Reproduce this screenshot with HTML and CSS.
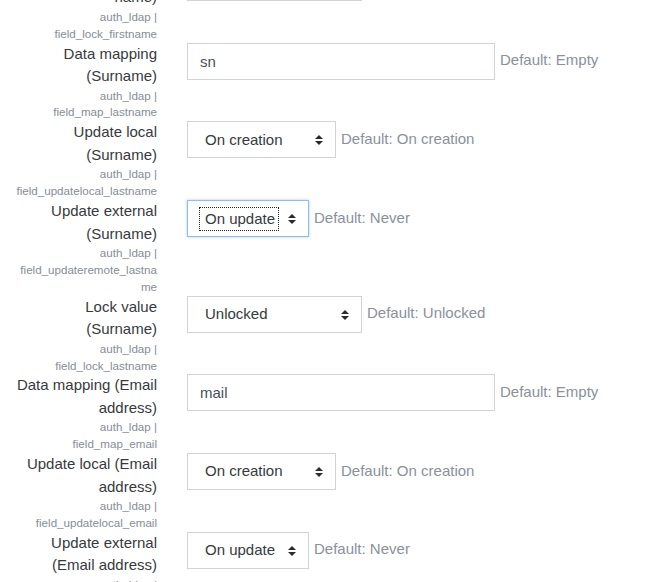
FILE: index.html
```html
<!DOCTYPE html>
<html lang="en">
<head>
  <meta charset="UTF-8" />
  <meta name="viewport" content="width=device-width, initial-scale=1.0" />
  <title>LDAP server - Data mapping</title>
  <link rel="stylesheet" href="styles.css">
</head>
<body>
  <div class="settings">

    <!-- Lock value (First name) -->
    <div class="form-item">
      <div class="form-label">
        <label>Lock value (First name)</label>
        <span class="form-shortname">auth_ldap | field_lock_firstname</span>
      </div>
      <div class="form-setting">
        <div class="select sel-lock"><span class="select-text">Unlocked</span><svg class="select-arrow" width="8" height="10" viewBox="0 0 8 10"><path d="M4 0 L8 4 L0 4 Z M0 6 L8 6 L4 10 Z" fill="#2b2b2b"/></svg></div>
        <div class="form-defaultinfo">Default: Unlocked</div>
      </div>
    </div>

    <!-- Data mapping (Surname) -->
    <div class="form-item">
      <div class="form-label">
        <label for="map_lastname">Data mapping (Surname)</label>
        <span class="form-shortname">auth_ldap | field_map_lastname</span>
      </div>
      <div class="form-setting">
        <input type="text" id="map_lastname" class="text-input" value="sn" />
        <div class="form-defaultinfo">Default: Empty</div>
      </div>
    </div>

    <!-- Update local (Surname) -->
    <div class="form-item">
      <div class="form-label">
        <label>Update local (Surname)</label>
        <span class="form-shortname">auth_ldap | field_updatelocal_lastname</span>
      </div>
      <div class="form-setting">
        <div class="select sel-local"><span class="select-text">On creation</span><svg class="select-arrow" width="8" height="10" viewBox="0 0 8 10"><path d="M4 0 L8 4 L0 4 Z M0 6 L8 6 L4 10 Z" fill="#2b2b2b"/></svg></div>
        <div class="form-defaultinfo">Default: On creation</div>
      </div>
    </div>

    <!-- Update external (Surname) -->
    <div class="form-item">
      <div class="form-label">
        <label>Update external (Surname)</label>
        <span class="form-shortname">auth_ldap | field_updateremote_lastname</span>
      </div>
      <div class="form-setting">
        <div class="select sel-remote is-focused"><span class="select-text">On update</span><svg class="select-arrow" width="8" height="10" viewBox="0 0 8 10"><path d="M4 0 L8 4 L0 4 Z M0 6 L8 6 L4 10 Z" fill="#2b2b2b"/></svg></div>
        <div class="form-defaultinfo">Default: Never</div>
      </div>
    </div>

    <!-- Lock value (Surname) -->
    <div class="form-item">
      <div class="form-label">
        <label>Lock value (Surname)</label>
        <span class="form-shortname">auth_ldap | field_lock_lastname</span>
      </div>
      <div class="form-setting">
        <div class="select sel-lock"><span class="select-text">Unlocked</span><svg class="select-arrow" width="8" height="10" viewBox="0 0 8 10"><path d="M4 0 L8 4 L0 4 Z M0 6 L8 6 L4 10 Z" fill="#2b2b2b"/></svg></div>
        <div class="form-defaultinfo">Default: Unlocked</div>
      </div>
    </div>

    <!-- Data mapping (Email address) -->
    <div class="form-item">
      <div class="form-label">
        <label for="map_email">Data mapping (Email address)</label>
        <span class="form-shortname">auth_ldap | field_map_email</span>
      </div>
      <div class="form-setting">
        <input type="text" id="map_email" class="text-input" value="mail" />
        <div class="form-defaultinfo">Default: Empty</div>
      </div>
    </div>

    <!-- Update local (Email address) -->
    <div class="form-item">
      <div class="form-label">
        <label>Update local (Email address)</label>
        <span class="form-shortname">auth_ldap | field_updatelocal_email</span>
      </div>
      <div class="form-setting">
        <div class="select sel-local"><span class="select-text">On creation</span><svg class="select-arrow" width="8" height="10" viewBox="0 0 8 10"><path d="M4 0 L8 4 L0 4 Z M0 6 L8 6 L4 10 Z" fill="#2b2b2b"/></svg></div>
        <div class="form-defaultinfo">Default: On creation</div>
      </div>
    </div>

    <!-- Update external (Email address) -->
    <div class="form-item">
      <div class="form-label">
        <label>Update external (Email address)</label>
        <span class="form-shortname">auth_ldap | field_updateremote_email</span>
      </div>
      <div class="form-setting">
        <div class="select sel-remote"><span class="select-text">On update</span><svg class="select-arrow" width="8" height="10" viewBox="0 0 8 10"><path d="M4 0 L8 4 L0 4 Z M0 6 L8 6 L4 10 Z" fill="#2b2b2b"/></svg></div>
        <div class="form-defaultinfo">Default: Never</div>
      </div>
    </div>

  </div>
</body>
</html>
```

FILE: styles.css
```css
body {
  margin: 0;
  padding: 0;
  font-family: "Liberation Sans", Arial, sans-serif;
  font-size: 15px;
  line-height: 22.5px;
  color: #373a3c;
  background: #fff;
  overflow: hidden;
}

/* page is scrolled: first setting is cut off at the top */
.settings {
  margin-top: -36.25px;
}

.form-item {
  display: flex;
  align-items: flex-start;
}

.form-label {
  width: 172px;
  flex-shrink: 0;
  box-sizing: border-box;
  padding-left: 13px;
  padding-right: 15px;
  text-align: right;
  overflow-wrap: anywhere;
}

.form-label label {
  display: block;
}

.form-shortname {
  display: block;
  font-size: 11.6px;
  line-height: 16.875px;
  color: #868e96;
}

.form-setting {
  display: flex;
  align-items: flex-start;
  padding-left: 15px;
}

.text-input {
  width: 308px;
  height: 37px;
  margin: 0;
  padding: 0 12px;
  box-sizing: border-box;
  border: 1px solid #ced4da;
  border-radius: 0;
  font-family: inherit;
  font-size: 15px;
  color: #495057;
  background: #fff;
}

.select {
  position: relative;
  display: flex;
  align-items: center;
  height: 37px;
  box-sizing: border-box;
  padding-left: 17px;
  border: 1px solid #ced4da;
  background: #fff;
  color: #373a3c;
}

.sel-lock {
  width: 175px;
}

.sel-local {
  width: 149px;
}

.sel-remote {
  width: 122px;
}

.select-arrow {
  position: absolute;
  right: 12px;
  top: 13px;
}

.select.is-focused {
  border-color: #8cbcf2;
  box-shadow: 0 0 3px rgba(90, 150, 235, 0.45);
}

.select.is-focused .select-text {
  margin-left: -5px;
  padding: 0 3px 0 5px;
  line-height: 22px;
  outline: 1px dotted #222;
}

.form-defaultinfo {
  padding-top: 6.5px;
  padding-left: 5px;
  color: #8a9199;
  white-space: nowrap;
}
```
